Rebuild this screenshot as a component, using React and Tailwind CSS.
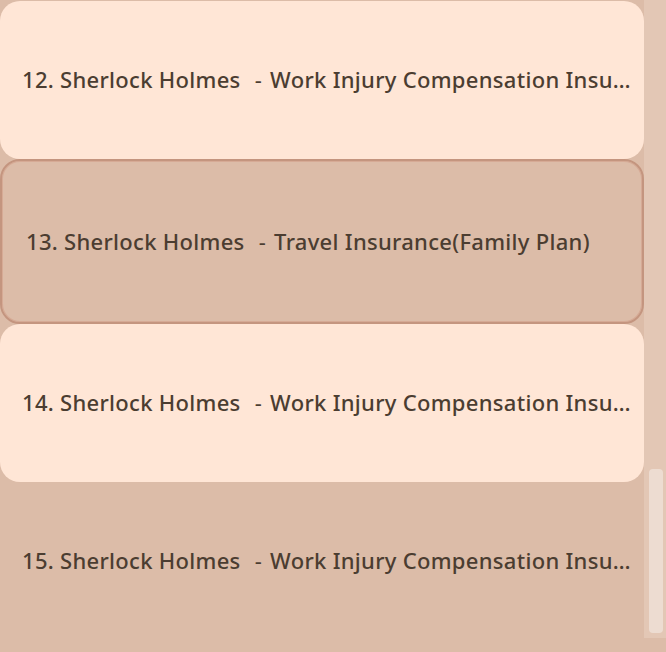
import React from 'react';

const policies = [
  { id: 12, holder: 'Sherlock Holmes', plan: 'Work Injury Compensation Insurance', style: 'card' },
  { id: 13, holder: 'Sherlock Holmes', plan: 'Travel Insurance(Family Plan)', style: 'selected' },
  { id: 14, holder: 'Sherlock Holmes', plan: 'Work Injury Compensation Insurance', style: 'card' },
  { id: 15, holder: 'Sherlock Holmes', plan: 'Work Injury Compensation Insurance', style: 'plain' },
];

function PolicyRow({ policy }) {
  let boxClass = 'h-[158px] rounded-[20px] flex items-center pl-[22px] pr-[9px]';
  if (policy.style === 'card') boxClass += ' bg-[#ffe6d6]';
  if (policy.style === 'selected') boxClass = 'h-[165px] rounded-[20px] flex items-center pl-[24px] pr-[9px] border-[2px] border-[#c4957f] bg-[#dcbca8] shadow-[inset_0_0_0_1px_#d6aa95]';

  return (
    <div className={boxClass}>
      <p className="truncate whitespace-pre text-[22px] leading-[28px] -mt-[2px] tracking-[0.3px] font-medium text-[#4b3d31]">
        {policy.id}. {policy.holder}   <span className="font-normal ml-[-4px] mr-[2px]">-</span> {policy.plan}
      </p>
    </div>
  );
}

export default function App() {
  return (
    <div
      className="w-[666px] h-[652px] bg-[#dcbca8] overflow-hidden flex items-start"
      style={{ fontFamily: '"Noto Sans", "Open Sans", sans-serif' }}
    >
      {/* list */}
      <div className="w-[644px] pt-px flex flex-col">
        {policies.map(p => (
          <PolicyRow key={p.id} policy={p} />
        ))}
      </div>

      {/* scrollbar */}
      <div className="w-[22px] h-[638px] bg-[#e3c7b5] flex flex-col justify-end pb-[5px] pl-[5px] pr-[3px]">
        <div className="h-[164px] rounded-[4px] bg-[#eddcd1]" />
      </div>
    </div>
  );
}
